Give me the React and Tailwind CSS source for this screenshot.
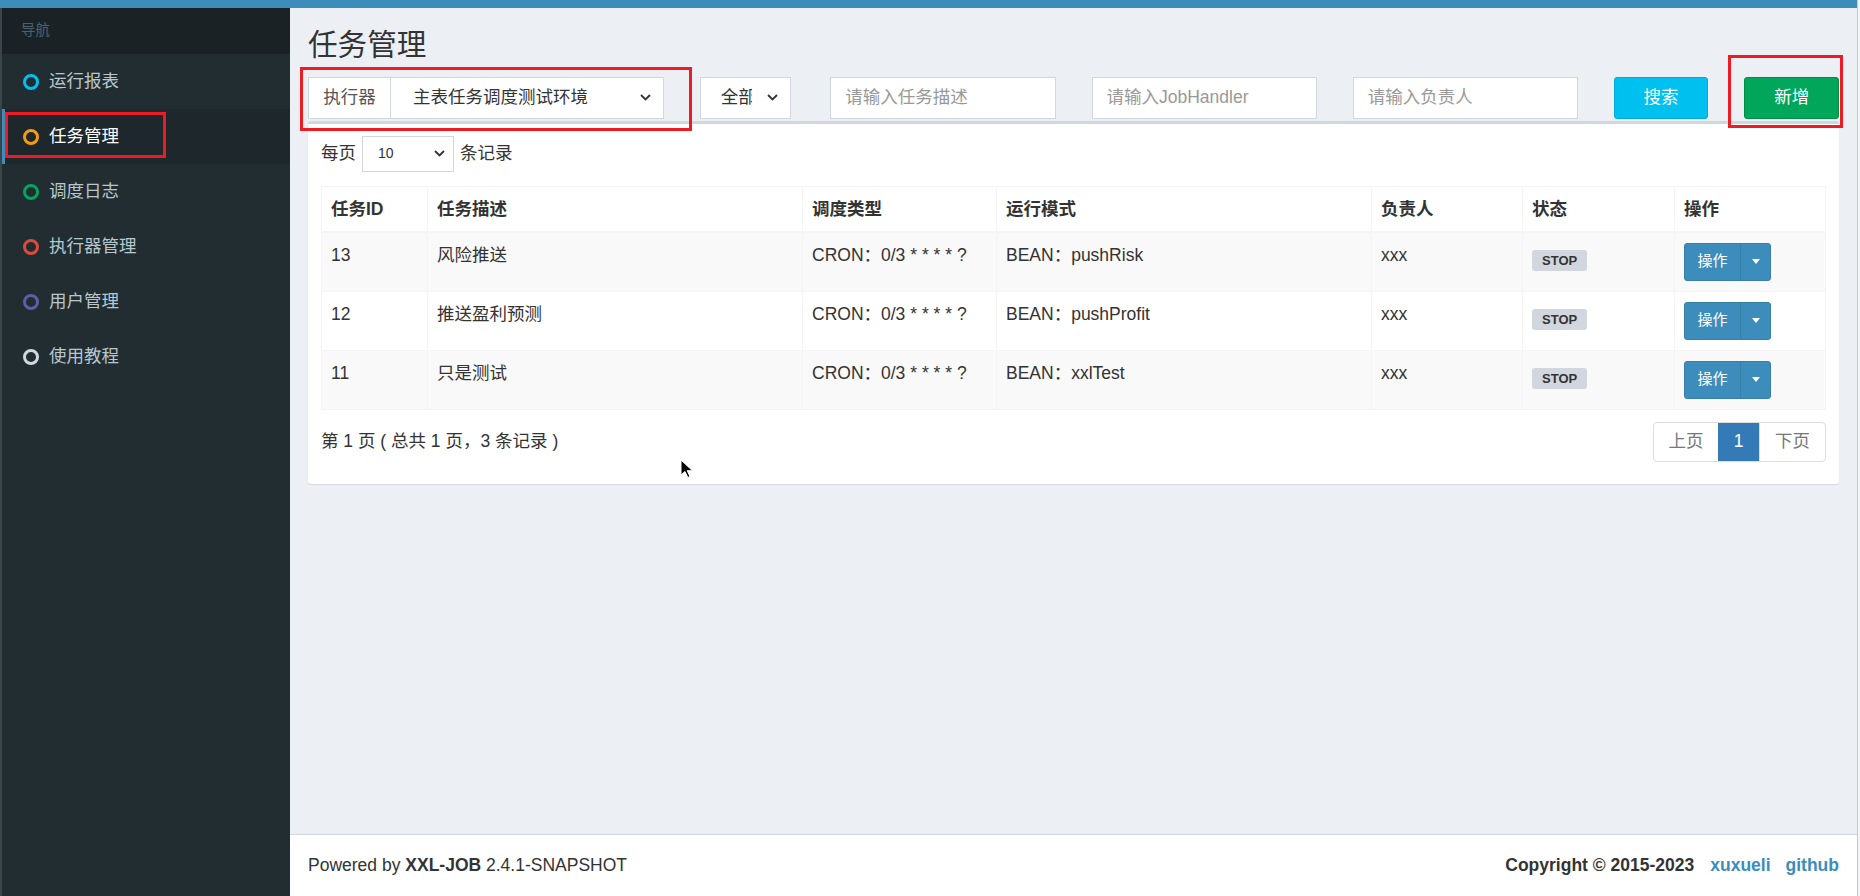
import React from 'react';

const menus = [
  { name: '运行报表', ring: 'border-[#00c0ef]' },
  { name: '任务管理', ring: 'border-[#f39c12]', active: true },
  { name: '调度日志', ring: 'border-[#00a65a]' },
  { name: '执行器管理', ring: 'border-[#dd4b39]' },
  { name: '用户管理', ring: 'border-[#605ca8]' },
  { name: '使用教程', ring: 'border-[#d2d6de]' },
];

const jobs = [
  { id: 13, desc: '风险推送', cron: 'CRON：0/3 * * * * ?', mode: 'BEAN：pushRisk', owner: 'xxx', striped: true },
  { id: 12, desc: '推送盈利预测', cron: 'CRON：0/3 * * * * ?', mode: 'BEAN：pushProfit', owner: 'xxx', striped: false },
  { id: 11, desc: '只是测试', cron: 'CRON：0/3 * * * * ?', mode: 'BEAN：xxlTest', owner: 'xxx', striped: true },
];

const Chevron = () => (
  <svg width="11" height="7" viewBox="0 0 11 7" className="shrink-0">
    <path d="M1 1l4.5 4.5L10 1" fill="none" stroke="#333" strokeWidth="1.8" />
  </svg>
);

const Sidebar = () => (
  <aside className="w-[290px] shrink-0 bg-[#222d32] border-l-2 border-[#3b4449]">
    <div className="h-[46px] bg-[#1a2226] flex items-center pl-[19px] text-[14.4px] text-[#4b646f]">导航</div>
    {menus.map((m) => (
      <div
        key={m.name}
        className={`relative h-[55px] flex items-center pl-[18px] border-l-[3px] ${
          m.active ? 'bg-[#1e282c] border-[#3c8dbc] text-white' : 'border-transparent text-[#b8c7ce]'
        }`}
      >
        <span className={`w-4 h-4 rounded-full border-[3px] ${m.ring}`} />
        <span className="ml-[10px]">{m.name}</span>
        {m.active && (
          <div className="absolute left-[0px] top-[3px] w-[161px] h-[46px] border-[3px] border-[#ed1c24]" />
        )}
      </div>
    ))}
  </aside>
);

const FilterRow = () => (
  <div className="relative -mx-[18px] mt-[15px] grid grid-cols-12 h-[42px]">
    <div className="col-span-3 px-[18px] flex">
      <div className="w-[83px] shrink-0 border border-[#d2d6de] bg-white flex items-center justify-center text-[#555]">执行器</div>
      <div className="flex-1 border border-l-0 border-[#d2d6de] bg-white flex items-center justify-between pl-[22px] pr-[12px] text-[#333]">
        <span>主表任务调度测试环境</span>
        <Chevron />
      </div>
    </div>
    <div className="col-span-1 px-[18px]">
      <div className="w-[91px] h-full border border-[#d2d6de] bg-white flex items-center pl-[20px] pr-[12px] justify-between">
        <span className="w-[31px] overflow-hidden whitespace-nowrap text-[#333]">全部</span>
        <Chevron />
      </div>
    </div>
    {['请输入任务描述', '请输入JobHandler', '请输入负责人'].map((p) => (
      <div key={p} className="col-span-2 px-[18px]">
        <input
          readOnly
          placeholder={p}
          className="w-full h-full border border-[#d2d6de] bg-white px-[14px] outline-none placeholder:text-[#999]"
        />
      </div>
    ))}
    <div className="col-span-1 px-[18px]">
      <button className="w-full h-full rounded-[3px] bg-[#00c0ef] border border-[#00acd6] text-white">搜索</button>
    </div>
    <div className="col-span-1 px-[18px]">
      <button className="w-full h-full rounded-[3px] bg-[#00a65a] border border-[#008d4c] text-white">新增</button>
    </div>
    {/* annotation boxes */}
    <div className="absolute left-[10px] top-[-10px] w-[392px] h-[64px] border-[3px] border-[#ed1c24] pointer-events-none" />
    <div className="absolute left-[1438px] top-[-22px] w-[115px] h-[73px] border-[3px] border-[#ed1c24] pointer-events-none" />
  </div>
);

const OpsButton = () => (
  <div className="flex h-[38px]">
    <div className="w-[57px] bg-[#3c8dbc] border border-[#367fa9] rounded-l-[3px] flex items-center justify-center text-white text-[15px]">操作</div>
    <div className="w-[31px] -ml-px bg-[#3c8dbc] border border-[#367fa9] rounded-r-[3px] flex items-center justify-center">
      <span className="w-0 h-0 border-t-[5px] border-t-white border-x-[4.5px] border-x-transparent" />
    </div>
  </div>
);

const JobTable = () => (
  <table className="w-full table-fixed border-collapse mt-[14px]">
    <colgroup>
      <col className="w-[106px]" />
      <col className="w-[375px]" />
      <col className="w-[194px]" />
      <col className="w-[375px]" />
      <col className="w-[151px]" />
      <col className="w-[152px]" />
      <col className="w-[151px]" />
    </colgroup>
    <thead>
      <tr>
        {['任务ID', '任务描述', '调度类型', '运行模式', '负责人', '状态', '操作'].map((h) => (
          <th
            key={h}
            className="text-left font-bold px-[9px] py-[10px] leading-[24px] border border-[#f4f4f4] border-b-2"
          >
            {h}
          </th>
        ))}
      </tr>
    </thead>
    <tbody>
      {jobs.map((j) => (
        <tr key={j.id} className={j.striped ? 'bg-[#f9f9f9]' : 'bg-white'}>
          <td className="align-top px-[9px] py-[10px] leading-[24px] border border-[#f4f4f4]">{j.id}</td>
          <td className="align-top px-[9px] py-[10px] leading-[24px] border border-[#f4f4f4]">{j.desc}</td>
          <td className="align-top px-[9px] py-[10px] leading-[24px] border border-[#f4f4f4]">{j.cron}</td>
          <td className="align-top px-[9px] py-[10px] leading-[24px] border border-[#f4f4f4]">{j.mode}</td>
          <td className="align-top px-[9px] py-[10px] leading-[24px] border border-[#f4f4f4]">{j.owner}</td>
          <td className="align-top px-[9px] py-[13px] border border-[#f4f4f4]">
            <span className="inline-flex items-center h-[21px] px-[10px] rounded-[3px] bg-[#d2d6de] text-[#333] font-bold text-[13px]">
              STOP
            </span>
          </td>
          <td className="align-top px-[9px] py-[10px] border border-[#f4f4f4]">
            <OpsButton />
          </td>
        </tr>
      ))}
    </tbody>
  </table>
);

export default function App() {
  return (
    <div className='w-[1860px] h-[896px] flex overflow-hidden text-[17.5px] text-[#333] font-["Liberation_Sans","Noto_Sans_CJK_SC",sans-serif]'>
      <div className="flex-1 flex flex-col min-w-0">
        <div className="h-[8px] shrink-0 bg-[#3c8dbc]" />
        <div className="flex flex-1 min-h-0">
          <Sidebar />
          <main className="relative flex-1 flex flex-col bg-[#ecf0f5]">
            <div className="flex-1 px-[18px] pt-[21px]">
              <h1 className="text-[29.6px] leading-[1.1] font-normal text-[#333]">任务管理</h1>
              <FilterRow />
              <div className="mt-[2px] bg-white border-t-[3px] border-[#d2d6de] rounded-[3px] shadow-[0_1px_1px_rgba(0,0,0,0.1)] px-[13px] pt-[12px] pb-[12px]">
                <div className="flex items-center h-[36px]">
                  <span>每页</span>
                  <div className="ml-[6px] w-[92px] h-[36px] border border-[#d2d6de] flex items-center justify-between pl-[15px] pr-[8px] text-[14px]">
                    <span>10</span>
                    <Chevron />
                  </div>
                  <span className="ml-[6px]">条记录</span>
                </div>
                <JobTable />
                <div className="flex items-center justify-between mt-[12px] mb-[10px]">
                  <span>第 1 页 ( 总共 1 页，3 条记录 )</span>
                  <div className="flex h-[40px] border border-[#ddd] rounded-[4px] overflow-hidden">
                    <span className="w-[64px] flex items-center justify-center text-[#777]">上页</span>
                    <span className="w-[41px] flex items-center justify-center bg-[#337ab7] text-white">1</span>
                    <span className="w-[66px] flex items-center justify-center text-[#777] border-l border-[#ddd]">下页</span>
                  </div>
                </div>
              </div>
            </div>
            <footer className="h-[62px] shrink-0 border-t border-[#d2d6de] bg-white px-[18px] flex items-center justify-between">
              <span>
                Powered by <b>XXL-JOB</b> 2.4.1-SNAPSHOT
              </span>
              <b>
                Copyright © 2015-2023
                <span className="ml-[16px] text-[#3c8dbc]">xuxueli</span>
                <span className="ml-[15px] text-[#3c8dbc]">github</span>
              </b>
            </footer>
            {/* mouse cursor */}
            <svg width="13" height="20" viewBox="0 0 13 20" className="absolute left-[390px] top-[451px]">
              <path d="M1 1v15l4-3.5 2.8 6 2.2-1-2.8-5.8H12.5z" fill="#000" stroke="#fff" strokeWidth="1" />
            </svg>
          </main>
        </div>
      </div>
      <div className="w-[3px] shrink-0 bg-[#f3f4f6] border-l border-[#c4c8cc]" />
    </div>
  );
}
